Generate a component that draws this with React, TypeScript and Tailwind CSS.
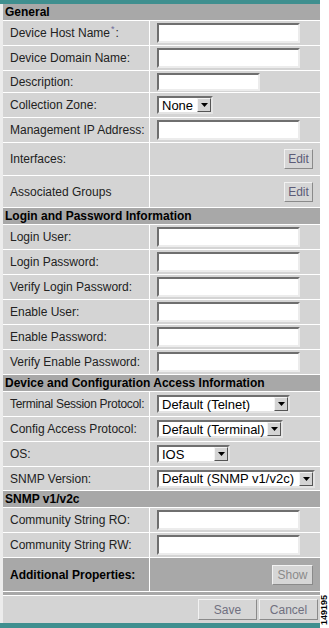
import type { ReactNode } from "react";

const teal = "bg-[#3f8f8f]";

function SectionHeader({ title }: { title: string }) {
  return (
    <div className="flex h-[16px] items-center bg-[#a8a8a8] pl-[2px] text-[12px] font-bold leading-none whitespace-nowrap text-black">
      {title}
    </div>
  );
}

function FieldRow({
  label,
  height = "h-[24px]",
  dark = false,
  children,
}: {
  label: ReactNode;
  height?: string;
  dark?: boolean;
  children?: ReactNode;
}) {
  const cell = dark ? "bg-[#a8a8a8]" : "bg-[#d4d4d4]";
  return (
    <div className={`flex gap-px ${height}`}>
      <div className={`flex w-[146px] items-center pl-[7px] text-[12px] whitespace-nowrap text-[#222] ${cell}`}>
        {label}
      </div>
      <div className={`flex w-[170px] items-center pl-[7px] ${cell}`}>{children}</div>
    </div>
  );
}

function TextInput({ width = "w-[143px]", height = "h-[20px]" }: { width?: string; height?: string }) {
  return (
    <div
      className={`${width} ${height} border-2 border-t-[#6f6f6f] border-l-[#6f6f6f] border-r-[#ececec] border-b-[#ececec] bg-white`}
    />
  );
}

function SelectBox({ value, width }: { value: string; width: string }) {
  return (
    <div
      className={`flex h-[18px] ${width} items-center border-2 border-t-[#6f6f6f] border-l-[#6f6f6f] border-r-[#e4e4e4] border-b-[#e4e4e4] bg-white`}
    >
      <span className="flex-1 pl-[3px] text-[13px] leading-none whitespace-nowrap text-black">{value}</span>
      <span className="flex h-[14px] w-[14px] items-center justify-center border border-t-[#f4f4f4] border-l-[#f4f4f4] border-r-[#555] border-b-[#555] bg-[#d4d4d4]">
        <svg width="7" height="4" viewBox="0 0 7 4">
          <path d="M0 0h7L3.5 4z" fill="#000" />
        </svg>
      </span>
    </div>
  );
}

function Btn({ label, width, height, text = "text-[#5c5c78]" }: { label: string; width: string; height: string; text?: string }) {
  return (
    <button
      type="button"
      className={`${width} ${height} border border-t-[#f2f2f2] border-l-[#f2f2f2] border-r-[#8a8a8a] border-b-[#8a8a8a] bg-[#d6d6d6] text-[12px] leading-none ${text}`}
    >
      {label}
    </button>
  );
}

export default function App() {
  return (
    <div className="flex h-[628px] w-[329px] bg-white font-['Liberation_Sans',Arial,sans-serif]">
      <div className="flex w-[320px] flex-col">
        <div className={`h-[4px] ${teal}`} />
        <div className="flex flex-1">
          <div className="w-[3px] bg-[#ececec]" />
          <div className="flex w-[317px] flex-col gap-px bg-white">
            <SectionHeader title="General" />
            <FieldRow
              label={
                <>
                  Device Host Name
                  <span className="mx-px -mt-[8px] text-[9px] leading-none text-[#6a6a9a]">*</span>:
                </>
              }
            >
              <TextInput />
            </FieldRow>
            <FieldRow label="Device Domain Name:">
              <TextInput />
            </FieldRow>
            <FieldRow label="Description:" height="h-[21px]">
              <TextInput width="w-[103px]" height="h-[18px]" />
            </FieldRow>
            <FieldRow label="Collection Zone:">
              <SelectBox value="None" width="w-[56px]" />
            </FieldRow>
            <FieldRow label="Management IP Address:">
              <TextInput />
            </FieldRow>
            <FieldRow label="Interfaces:" height="h-[32px]">
              <div className="flex flex-1 justify-end pr-[7px]">
                <Btn label="Edit" width="w-[29px]" height="h-[20px]" />
              </div>
            </FieldRow>
            <FieldRow label="Associated Groups" height="h-[31px]">
              <div className="flex flex-1 justify-end pr-[7px]">
                <Btn label="Edit" width="w-[29px]" height="h-[20px]" />
              </div>
            </FieldRow>

            <SectionHeader title="Login and Password Information" />
            {["Login User:", "Login Password:", "Verify Login Password:", "Enable User:", "Enable Password:", "Verify Enable Password:"].map(
              (label) => (
                <FieldRow key={label} label={label}>
                  <TextInput />
                </FieldRow>
              ),
            )}

            <SectionHeader title="Device and Configuration Access Information" />
            <FieldRow label={<span className="tracking-[-0.3px]">Terminal Session Protocol:</span>}>
              <SelectBox value="Default (Telnet)" width="w-[133px]" />
            </FieldRow>
            <FieldRow label="Config Access Protocol:">
              <SelectBox value="Default (Terminal)" width="w-[126px]" />
            </FieldRow>
            <FieldRow label="OS:">
              <SelectBox value="IOS" width="w-[73px]" />
            </FieldRow>
            <FieldRow label="SNMP Version:" height="h-[23px]">
              <SelectBox value="Default (SNMP v1/v2c)" width="w-[158px]" />
            </FieldRow>

            <SectionHeader title="SNMP v1/v2c" />
            <FieldRow label="Community String RO:">
              <TextInput />
            </FieldRow>
            <FieldRow label="Community String RW:">
              <TextInput />
            </FieldRow>
            <FieldRow label={<span className="font-bold text-black">Additional Properties:</span>} height="h-[33px]" dark>
              <div className="flex flex-1 justify-end pr-[7px]">
                <Btn label="Show" width="w-[41px]" height="h-[20px]" text="text-[#8a8a8a]" />
              </div>
            </FieldRow>
            <div className="h-[3px] bg-[#a8a8a8]" />
            <div className="flex h-[27px] items-center justify-end gap-[2px] bg-[#d4d4d4] pr-[2px]">
              <Btn label="Save" width="w-[59px]" height="h-[21px]" text="text-[#707080]" />
              <Btn label="Cancel" width="w-[59px]" height="h-[21px]" text="text-[#707080]" />
            </div>
          </div>
        </div>
        <div className={`h-[5px] ${teal}`} />
      </div>
      <div className="flex w-[9px] flex-col items-center justify-end pb-[3px]">
        <span className="rotate-180 text-[9px] leading-none font-bold text-black [writing-mode:vertical-rl]">149195</span>
      </div>
    </div>
  );
}
